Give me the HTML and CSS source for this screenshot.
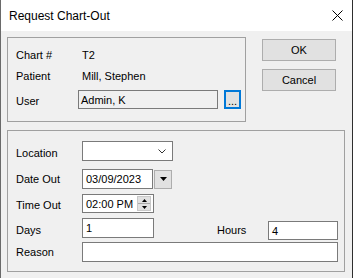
FILE: index.html
```html
<!DOCTYPE html>
<html lang="en">
<head>
    <meta charset="UTF-8">
    <title>Request Chart-Out</title>
    <link rel="stylesheet" href="styles.css">
</head>
<body>

<div class="window">
    <div class="titlebar">
        <span class="title">Request Chart-Out</span>
        <svg class="close" width="11" height="11" viewBox="0 0 11 11">
            <path d="M0.5 0.5 L10.5 10.5 M10.5 0.5 L0.5 10.5" stroke="#000" stroke-width="1" fill="none"/>
        </svg>
    </div>

    <div class="content">
        <div class="top">
            <div class="group group-chart">
                <div class="row">
                    <span class="label">Chart #</span>
                    <span class="value">T2</span>
                </div>
                <div class="row">
                    <span class="label">Patient</span>
                    <span class="value">Mill, Stephen</span>
                </div>
                <div class="row row-user">
                    <span class="label label-low">User</span>
                    <div class="box box-readonly">Admin, K</div>
                    <button class="browse">...</button>
                </div>
            </div>
            <div class="actions">
                <button class="btn">OK</button>
                <button class="btn">Cancel</button>
            </div>
        </div>

        <div class="group group-out">
            <div class="row2 row-location">
                <span class="label2 label-low">Location</span>
                <div class="box box-combo">
                    <svg class="chevron" width="8" height="5" viewBox="0 0 8 5">
                        <polyline points="0.5,0.5 4,4 7.5,0.5" fill="none" stroke="#333" stroke-width="1"/>
                    </svg>
                </div>
            </div>
            <div class="row2 row-date">
                <span class="label2">Date Out</span>
                <div class="box box-date">03/09/2023</div>
                <button class="drop">
                    <svg width="7" height="4" viewBox="0 0 7 4"><polygon points="0,0 7,0 3.5,4" fill="#000"/></svg>
                </button>
            </div>
            <div class="row2 row-time">
                <span class="label2 label-low">Time Out</span>
                <div class="box box-time">
                    <span>02:00 PM</span>
                    <div class="spin">
                        <div class="spin-btn"><svg width="5" height="3" viewBox="0 0 5 3"><polygon points="2.5,0 5,3 0,3" fill="#000"/></svg></div>
                        <div class="spin-btn"><svg width="5" height="3" viewBox="0 0 5 3"><polygon points="0,0 5,0 2.5,3" fill="#000"/></svg></div>
                    </div>
                </div>
            </div>
            <div class="row2 row-days">
                <span class="label2 label-days">Days</span>
                <div class="box box-days">1</div>
                <span class="label-hours">Hours</span>
                <div class="box box-hours">4</div>
            </div>
            <div class="row2 row-reason">
                <span class="label2">Reason</span>
                <div class="box box-reason"></div>
            </div>
        </div>
    </div>
</div>

</body>
</html>
```

FILE: styles.css
```css
body {
    margin: 0;
    font-family: "Liberation Sans", Arial, sans-serif;
    font-size: 11px;
    color: #000;
}
.window {
    width: 353px;
    height: 278px;
    box-sizing: border-box;
    background-color: #f0f0f0;
    border-left: 1px solid #6a6a6a;
    border-right: 1px solid #2e2e2e;
    overflow: hidden;
}
.titlebar {
    height: 31px;
    background-color: #fff;
    display: flex;
    align-items: center;
    justify-content: space-between;
    padding: 0 9px 0 8px;
}
.title {
    font-size: 12px;
}
.close {
    display: block;
}
.content {
    padding: 6px 0 0 6px;
}
.top {
    display: flex;
    align-items: flex-start;
}
.group {
    box-sizing: border-box;
    border: 1px solid #a0a0a0;
}
.group-chart {
    width: 239px;
    height: 85px;
    padding: 6px 0 0 8px;
}
.row {
    display: flex;
    align-items: center;
    height: 21px;
}
.label {
    width: 62px;
    flex-shrink: 0;
}
.value {
    padding-left: 4px;
}
.label-low {
    padding-top: 3px;
}
.row-user {
    height: 19px;
    margin-top: 4px;
}
.box {
    box-sizing: border-box;
    height: 20px;
    border: 1px solid #7a7a7a;
    background-color: #fff;
    padding-left: 3px;
    display: flex;
    align-items: center;
    flex-shrink: 0;
}
.box-readonly {
    width: 140px;
    height: 19px;
    padding-left: 2px;
    background-color: #f0f0f0;
}
.browse {
    box-sizing: border-box;
    width: 17px;
    height: 19px;
    margin-left: 6px;
    padding: 4px 0 0;
    border: 2px solid #0078d7;
    background-color: #e1e1e1;
    font-family: inherit;
    font-size: 11px;
    line-height: 11px;
}
.actions {
    display: flex;
    flex-direction: column;
    gap: 8px;
    margin-left: 16px;
    padding-top: 2px;
}
.btn {
    box-sizing: border-box;
    width: 74px;
    height: 22px;
    padding: 0;
    border: 1px solid #adadad;
    background-color: #e1e1e1;
    font-family: inherit;
    font-size: 11px;
}
.group-out {
    width: 338px;
    height: 142px;
    margin-top: 8px;
    padding: 10px 0 0 8px;
}
.row2 {
    display: flex;
    align-items: center;
    height: 20px;
}
.label2 {
    width: 66px;
    flex-shrink: 0;
}
.box-combo {
    width: 91px;
    justify-content: flex-end;
    padding-right: 6px;
}
.chevron {
    display: block;
}
.row-date {
    margin-top: 8px;
}
.box-date {
    width: 71px;
}
.drop {
    box-sizing: border-box;
    width: 18px;
    height: 19px;
    margin-left: 1px;
    padding: 0;
    border: 1px solid #adadad;
    background-color: #e1e1e1;
    display: flex;
    align-items: center;
    justify-content: center;
}
.drop svg {
    display: block;
}
.row-time {
    margin-top: 5px;
    height: 19px;
}
.box-time {
    width: 72px;
    height: 19px;
    justify-content: space-between;
    padding-right: 2px;
}
.spin {
    width: 14px;
    height: 15px;
    display: flex;
    flex-direction: column;
    border: 1px solid #c8c8c8;
    box-sizing: border-box;
}
.spin-btn {
    flex: 1;
    background-color: #e1e1e1;
    display: flex;
    align-items: center;
    justify-content: center;
}
.spin-btn + .spin-btn {
    border-top: 1px solid #a8a8a8;
}
.spin-btn svg {
    display: block;
}
.row-days {
    margin-top: 5px;
    height: 21px;
    align-items: flex-start;
}
.label-days {
    padding-top: 6px;
}
.box-days {
    width: 72px;
}
.label-hours {
    margin-left: 63px;
    padding-top: 6px;
}
.box-hours {
    width: 70px;
    height: 19px;
    margin-top: 3px;
    margin-left: auto;
    margin-right: 6px;
}
.row-reason {
    margin-top: 3px;
}
.box-reason {
    width: 256px;
}
```
